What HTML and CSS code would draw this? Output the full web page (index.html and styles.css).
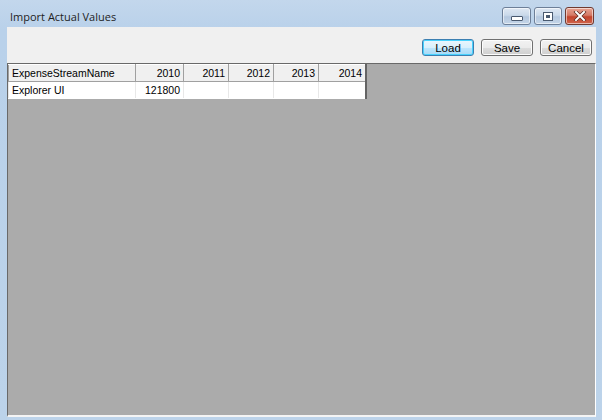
FILE: index.html
```html
<!DOCTYPE html>
<html lang="en">
<head>
    <meta charset="UTF-8">
    <title>Import Actual Values</title>
    <link rel="stylesheet" href="styles.css">
</head>
<body>
<div class="window">
    <div class="titlebar">
        <span class="title">Import Actual Values</span>
        <div class="caption-buttons">
            <div class="cap-btn cap-min"><span class="min-glyph"></span></div>
            <div class="cap-btn cap-max"><span class="max-glyph"></span></div>
            <div class="cap-btn cap-close">
                <svg width="14" height="10" viewBox="0 0 14 10">
                    <path d="M3 1 L11 9 M11 1 L3 9" stroke="#5a2a20" stroke-width="3.4" stroke-linecap="square"/>
                    <path d="M3 1 L11 9 M11 1 L3 9" stroke="#ffffff" stroke-width="2" stroke-linecap="square"/>
                </svg>
            </div>
        </div>
    </div>
    <div class="client">
        <div class="toolbar">
            <button class="btn btn-default">Load</button>
            <button class="btn">Save</button>
            <button class="btn">Cancel</button>
        </div>
        <div class="content">
            <table class="grid">
                <tr class="header">
                    <th class="name-col">ExpenseStreamName</th>
                    <th class="year-col wide">2010</th>
                    <th class="year-col">2011</th>
                    <th class="year-col">2012</th>
                    <th class="year-col">2013</th>
                    <th class="year-col last">2014</th>
                </tr>
                <tr>
                    <td>Explorer UI</td>
                    <td class="num">121800</td>
                    <td class="num"></td>
                    <td class="num"></td>
                    <td class="num"></td>
                    <td class="num"></td>
                </tr>
            </table>
        </div>
    </div>
</div>
</body>
</html>
```

FILE: styles.css
```css
body {
    margin: 0;
    padding: 0;
    background-color: #bfd4ea;
    font-family: 'Liberation Sans', Arial, sans-serif;
}
.window {
    width: 602px;
    height: 420px;
    display: flex;
    flex-direction: column;
    background: linear-gradient(to bottom, #c3d7ec 0px, #b9d1ea 30px, #bcd3ea 100%);
}
.titlebar {
    height: 27px;
    display: flex;
    align-items: center;
    justify-content: space-between;
    padding: 0 8px 0 10px;
}
.title {
    font-family: 'Open Sans', 'Noto Sans', sans-serif;
    font-size: 11px;
    color: #1e1e1e;
    margin-top: 5px;
}
.caption-buttons {
    display: flex;
    gap: 3px;
    align-self: flex-start;
    margin-top: 7px;
}
.cap-btn {
    height: 16px;
    border: 1px solid #6d7f98;
    border-radius: 3px;
    background: linear-gradient(to bottom, #dfe8f3 0%, #cad9ea 45%, #b5c8df 55%, #c4d5e8 100%);
    box-shadow: inset 0 0 0 1px rgba(255, 255, 255, 0.55);
    display: flex;
    align-items: center;
    justify-content: center;
}
.cap-min {
    width: 27px;
}
.cap-max {
    width: 26px;
}
.cap-close {
    width: 27px;
    border-color: #6f3a30;
    background: linear-gradient(to bottom, #e8a493 0%, #d47a66 45%, #c2432c 55%, #d0654c 100%);
}
.min-glyph {
    width: 10px;
    height: 3px;
    margin-top: 5px;
    background-color: #ffffff;
    border: 1px solid #4a5a70;
    border-radius: 1px;
}
.max-glyph {
    width: 4px;
    height: 3px;
    border: 2px solid #ffffff;
    outline: 1px solid #4a5a70;
    background-color: #4a5a70;
}
.client {
    flex: 1;
    margin: 0 6px 3px 7px;
    display: flex;
    flex-direction: column;
}
.toolbar {
    height: 36px;
    background-color: #f0f0f0;
    display: flex;
    justify-content: flex-end;
    align-items: flex-start;
    gap: 7px;
    padding: 12px 4px 0 0;
    box-sizing: border-box;
}
.btn {
    width: 52px;
    height: 17px;
    padding: 0;
    font-family: 'Liberation Sans', Arial, sans-serif;
    font-size: 11.5px;
    color: #000000;
    border: 1px solid #707070;
    border-radius: 3px;
    background: linear-gradient(to bottom, #f2f2f2 0%, #ebebeb 50%, #dddddd 51%, #cfcfcf 100%);
    box-shadow: inset 0 0 0 1px #fcfcfc;
}
.btn-default {
    border-color: #3c7fb1;
    background: linear-gradient(to bottom, #eaf6fd 0%, #d9f0fc 50%, #bee6fd 51%, #a7d9f5 100%);
    box-shadow: inset 0 0 0 1px #48d2fd;
}
.content {
    flex: 1;
    background-color: #ababab;
    border-top: 1px solid #696969;
    border-left: 1px solid #696969;
    border-right: 1px solid #ffffff;
    border-bottom: 2px solid #f4f4f4;
}
.grid {
    border-collapse: collapse;
    background-color: #ffffff;
    border-right: 2px solid #646464;
    border-bottom: 1px solid #646464;
    font-size: 10.5px;
    color: #000000;
}
.grid th,
.grid td {
    height: 16px;
    padding: 0 3px;
    font-weight: normal;
    white-space: nowrap;
}
.grid th {
    background-color: #f0f0f0;
    border: 1px solid #a0a0a0;
    border-top: 1px solid #ffffff;
    text-align: right;
}
.grid th.name-col {
    text-align: left;
    width: 120px;
}
.grid .year-col {
    width: 38px;
}
.grid .year-col.wide {
    width: 41px;
}
.grid .year-col.last {
    width: 40px;
}
.grid td {
    border-left: 1px solid #e8e8e8;
    border-bottom: 1px solid #ffffff;
}
.grid td.num {
    text-align: right;
}
```
